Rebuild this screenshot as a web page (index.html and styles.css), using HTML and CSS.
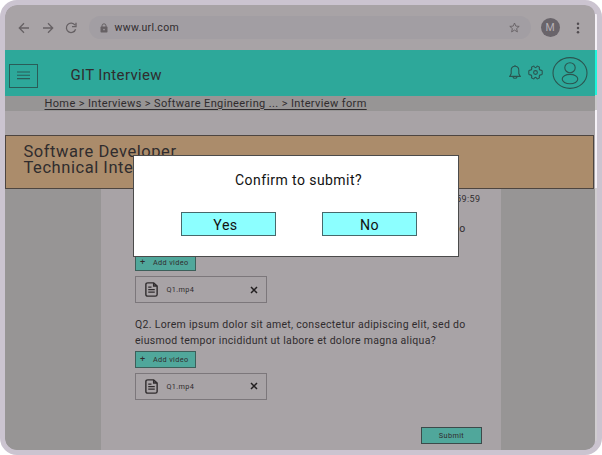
FILE: index.html
```html
<!DOCTYPE html>
<html lang="en">
<head>
<meta charset="utf-8">
<title>GIT Interview</title>
<link rel="stylesheet" href="styles.css">
</head>
<body>
<div class="window">
  <div class="screen">
    <header class="browser">
      <svg class="nav" width="12" height="12" viewBox="0 0 12 12"><path d="M11 6H1.5M6 1.3L1.3 6L6 10.7"/></svg>
      <svg class="nav" width="12" height="12" viewBox="0 0 12 12"><path d="M1 6H10.5M6 1.3L10.7 6L6 10.7"/></svg>
      <svg class="nav" width="12" height="12" viewBox="0 0 12 12"><path d="M10 3.2A4.7 4.7 0 1 0 10.6 7.2M11 .8V4.6H7"/></svg>
      <div class="address">
        <svg class="lock" width="8" height="10" viewBox="0 0 8 10"><path d="M2 4V2.8a2 2 0 0 1 4 0V4" fill="none" stroke="#666164"/><rect x=".5" y="3.6" width="7" height="6" rx=".8" fill="#666164"/><circle cx="4" cy="6.6" r=".8" fill="#a29ea3"/></svg>
        <span class="url">www.url.com</span>
        <svg class="star" width="11" height="11" viewBox="0 0 11 11"><path d="M5.5 1L6.8 4.1L10.2 4.4L7.6 6.6L8.4 9.9L5.5 8.1L2.6 9.9L3.4 6.6L.8 4.4L4.2 4.1Z"/></svg>
      </div>
      <span class="account">M</span>
      <svg class="dots" width="4" height="12" viewBox="0 0 4 12"><circle cx="2" cy="1.8" r="1.25"/><circle cx="2" cy="6" r="1.25"/><circle cx="2" cy="10.2" r="1.25"/></svg>
    </header>
    <div class="appbar">
      <div class="menu"><svg width="13" height="9" viewBox="0 0 13 9"><path d="M0 1H13M0 4.3H13M0 7.6H13"/></svg></div>
      <h1 class="brand">GIT Interview</h1>
      <svg class="bell" width="12" height="15" viewBox="0 0 12 15"><path d="M6 1.3C3.5 1.3 2.2 3.2 2.2 5.4V8.6L.8 11.4H11.2L9.8 8.6V5.4C9.8 3.2 8.5 1.3 6 1.3ZM4 11.8C4.3 13.8 7.7 13.8 8 11.8M5.2.8H6.8"/></svg>
      <svg class="gear" width="15" height="15" viewBox="0 0 15 15"><path d="M4.9 1.4Q6.2.6 6.4 2Q7.5 3.2 8.6 2Q8.8.6 10.1 1.4L11.4 2.2Q11.7 2.8 11.2 3.6Q11.3 5 12.7 5.1Q14.2 5.2 14.2 6V9Q14.2 9.8 12.7 9.9Q11.3 10 11.2 11.4Q11.7 12.2 11.4 12.8L10.1 13.6Q8.8 14.4 8.6 13Q7.5 11.8 6.4 13Q6.2 14.4 4.9 13.6L3.6 12.8Q3.3 12.2 3.8 11.4Q3.7 10 2.3 9.9Q.8 9.8 .8 9V6Q.8 5.2 2.3 5.1Q3.7 5 3.8 3.6Q3.3 2.8 3.6 2.2Z"/><circle cx="7.5" cy="7.5" r="1.9"/></svg>
      <svg class="user" width="36" height="32" viewBox="0 0 36 32"><ellipse cx="18" cy="16" rx="17" ry="15.4"/><ellipse cx="18" cy="10.7" rx="5.2" ry="5"/><ellipse cx="18" cy="22.1" rx="7.8" ry="4.7"/></svg>
    </div>
    <nav class="crumbs"><a>Home &gt; Interviews &gt; Software Engineering ... &gt; Interview form</a></nav>
    <div class="banner">Software Developer<br>Technical Interview</div>
    <main class="body">
      <section class="form">
        <div class="timer">59:59</div>
        <p class="question q1">Q1. Lorem ipsum dolor sit amet, consectetur adipiscing elit, sed do<br>eiusmod tempor incididunt ut labore et dolore magna aliqua?</p>
        <div class="add"><span class="plus">+</span>Add video</div>
        <div class="file">
          <svg class="doc" width="13" height="15" viewBox="0 0 12 15" preserveAspectRatio="none"><path d="M2.6.8H8L11.2 4V12.4Q11.2 14.1 9.5 14.1H2.5Q.8 14.1 .8 12.4V2.5Q.8.8 2.6.8ZM8 .8V4H11.2M3 5.2H6M3 7.7H9M3 10.2H9"/></svg>
          <span class="name">Q1.mp4</span>
          <svg class="remove" width="8" height="8" viewBox="0 0 8 8"><path d="M1 1L7 7M7 1L1 7"/></svg>
        </div>
        <p class="question">Q2. Lorem ipsum dolor sit amet, consectetur adipiscing elit, sed do<br>eiusmod tempor incididunt ut labore et dolore magna aliqua?</p>
        <div class="add"><span class="plus">+</span>Add video</div>
        <div class="file">
          <svg class="doc" width="13" height="15" viewBox="0 0 12 15" preserveAspectRatio="none"><path d="M2.6.8H8L11.2 4V12.4Q11.2 14.1 9.5 14.1H2.5Q.8 14.1 .8 12.4V2.5Q.8.8 2.6.8ZM8 .8V4H11.2M3 5.2H6M3 7.7H9M3 10.2H9"/></svg>
          <span class="name">Q1.mp4</span>
          <svg class="remove" width="8" height="8" viewBox="0 0 8 8"><path d="M1 1L7 7M7 1L1 7"/></svg>
        </div>
        <div class="submit">Submit</div>
      </section>
    </main>
  </div>
  <div class="edge"></div>
</div>
<div class="dialog">
  <p class="prompt">Confirm to submit?</p>
  <div class="choices"><div class="choice">Yes</div><div class="choice">No</div></div>
</div>
</body>
</html>
```
FILE: styles.css
```css
* { box-sizing: border-box; margin: 0; padding: 0; }
body { width: 602px; height: 455px; overflow: hidden; background: #fff; font-family: Roboto, sans-serif; color: #302c2e; position: relative; }
svg { display: block; flex: none; fill: none; }
.window { width: 602px; height: 455px; border: 5px solid #cbc4d0; border-radius: 17px; background: #cbc4d0; display: flex; overflow: hidden; }
.screen { width: 590px; height: 445px; flex: none; background: #a8a3a6; border-radius: 12px 10px 10px 12px; overflow: hidden; display: flex; flex-direction: column; }
.edge { width: 2px; height: 427px; margin-top: 9px; background: linear-gradient(#f4f0f6 36px, #1ef5dc 36px 81px, #c9c7c9 81px 96px, #f4f0f6 96px 174px, #d0cdd0 174px); }

.browser { height: 45px; flex: none; display: flex; align-items: center; padding-left: 13px; }
.nav { stroke: #666164; stroke-width: 1.3; margin-right: 11.5px; }
.address { width: 442px; height: 23px; border-radius: 12px; background: #a29ea3; display: flex; align-items: center; padding: 0 11px; }
.lock { margin: 0 6px 0 0; }
.url { font-size: 10.5px; letter-spacing: .3px; flex: 1; padding-left: 1px; }
.star { stroke: #666164; stroke-width: .9; }
.account { width: 19px; height: 19px; border-radius: 50%; background: #69646a; color: #b5b0b4; font-size: 10.5px; line-height: 19px; text-align: center; margin-left: 10px; }
.dots { fill: #514c50; margin-left: 16px; }

.appbar { height: 45.5px; flex: none; background: #2da89a; display: flex; align-items: center; }
.menu { width: 29px; height: 24px; margin: 6px 0 0 4px; border: 1px solid #2a5c58; display: flex; align-items: center; justify-content: center; }
.menu svg { stroke: #2a5c58; stroke-width: 1.1; }
.brand { font-size: 15px; font-weight: 400; letter-spacing: .34px; margin: 5px 0 0 32.5px; flex: 1; }
.bell, .gear, .user { stroke: #2b5550; stroke-width: 1.1; }
.bell { margin-right: 7px; }
.gear { margin-right: 9px; }
.user { margin-right: 7px; }

.crumbs { height: 15px; flex: none; background: #979595; padding-left: 39.5px; font-size: 11px; line-height: 16px; letter-spacing: .37px; white-space: nowrap; }
.crumbs a { text-decoration: underline; text-underline-offset: 2px; }
.banner { height: 53.5px; flex: none; margin: 24.5px 1px 0 0; border: 1px solid #4d4540; background: #ab8c6b; padding: 8px 0 0 17.5px; font-size: 16.5px; line-height: 16px; letter-spacing: .55px; }
.body { flex: 1; min-height: 0; background: #979595; padding-left: 96px; }
.form { width: 400px; height: 100%; background: #a8a3a6; padding: 5px 20px 0 34px; overflow: hidden; display: flex; flex-direction: column; align-items: flex-start; }
.timer { align-self: flex-end; font-size: 9px; line-height: 11px; letter-spacing: .4px; margin-right: .5px; }
.question { font-size: 10.5px; line-height: 16px; letter-spacing: .3px; white-space: nowrap; }
.q1 { margin-top: 16px; }
.add { width: 61px; height: 17px; border: 1px solid #3c5f5a; background: #50a79b; font-size: 7.3px; line-height: 16px; letter-spacing: .35px; display: flex; margin-top: 1.5px; }
.plus { width: 17px; padding-left: 4px; font-size: 9px; line-height: 14px; }
.file { width: 132px; height: 27px; border: 1px solid #7c777b; margin: 5px 0 14px; display: flex; align-items: center; padding: 0 8.5px 0 9px; font-size: 7.3px; letter-spacing: .35px; }
.doc { stroke: #302c2e; stroke-width: 1.3; }
.name { margin-left: 8.5px; flex: 1; }
.remove { stroke: #221f20; stroke-width: 1.5; }
.submit { align-self: flex-end; width: 61px; height: 17px; border: 1px solid #3c4a4a; background: #50a79b; font-size: 7.3px; line-height: 16px; text-align: center; letter-spacing: .38px; margin: 13.5px -1px 0 0; }

.dialog { position: absolute; left: 133px; top: 155px; width: 326px; height: 102px; background: #fff; border: 1px solid #4b4b4b; color: #111; }
.prompt { font-size: 14px; line-height: 18px; letter-spacing: .43px; text-align: center; margin: 14.5px 0 0 5px; }
.choices { display: flex; gap: 46px; padding-left: 47px; margin-top: 23.5px; }
.choice { width: 95px; height: 24px; border: 1px solid #46696b; background: #8cffff; font-size: 14.2px; line-height: 24px; letter-spacing: .45px; text-align: center; padding-right: 6px; }
.choice + .choice { padding: 0; }
```
